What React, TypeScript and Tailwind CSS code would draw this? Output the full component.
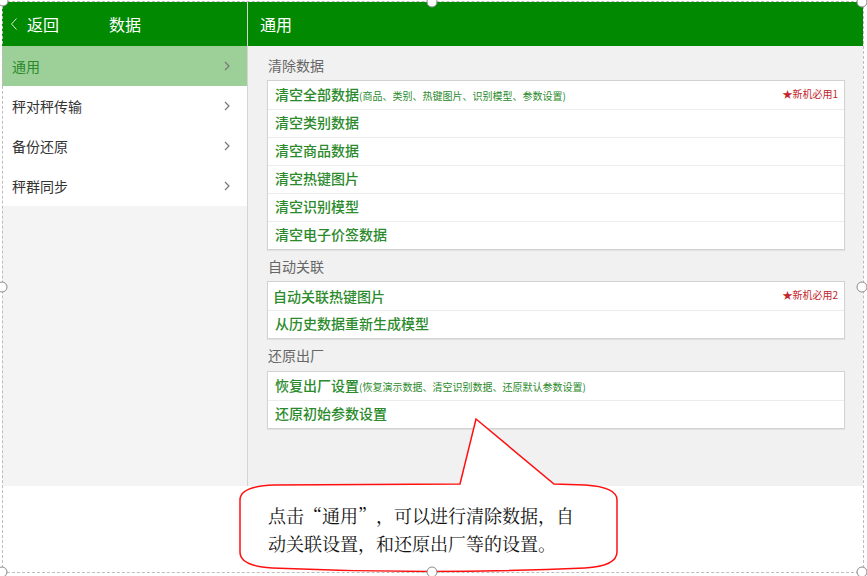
import React from "react";

const Chevron = () => (
  <svg width="6" height="10" viewBox="0 0 6 10" className="block">
    <polyline points="1,1 5,5 1,9" fill="none" stroke="#777" strokeWidth="1.2" />
  </svg>
);

const Row = ({ children, first }: { children: React.ReactNode; first?: boolean }) => (
  <div
    className={
      "h-[28px] flex items-center justify-between pl-[7px] pr-[6px] pb-[3px] " +
      (first ? "" : "border-t border-[#ececec]")
    }
  >
    {children}
  </div>
);

const Main = ({ t }: { t: string }) => (
  <span className="text-[14px] font-medium text-[#2b8a2b] leading-none">{t}</span>
);
const Tag = ({ t }: { t: string }) => (
  <span className="text-[10px] text-[#c2262c] leading-none">★{t}</span>
);

const Card = ({ children }: { children: React.ReactNode }) => (
  <div className="bg-white border border-[#d2d2d2] shadow-[0_1px_1px_rgba(0,0,0,0.06)]">{children}</div>
);

const Handle = ({ x, y }: { x: number; y: number }) => (
  <div
    className="absolute w-[11px] h-[11px] rounded-full bg-white border border-[#8a8a8a] -translate-x-1/2 -translate-y-1/2"
    style={{ left: x, top: y }}
  />
);

export default function App() {
  return (
    <div className="relative w-[867px] h-[576px] bg-white overflow-hidden font-['Noto_Sans_CJK_SC',sans-serif]">
      <div className="pl-[2px] pt-[2px]">
        <div className="flex w-[861px] h-[484px]">
          {/* left column */}
          <div className="w-[246px] flex flex-col border-r border-[#d4d4d4] bg-[#f4f4f4]">
            <div className="h-[44px] bg-[#028902] flex items-center text-white text-[16px]">
              <svg width="8" height="14" viewBox="0 0 8 14" className="ml-[8px] block">
                <polyline points="6.5,1.5 1.5,7 6.5,12.5" fill="none" stroke="#d8ecd8" strokeWidth="1" />
              </svg>
              <span className="ml-[9px]">返回</span>
              <span className="ml-[50px]">数据</span>
            </div>
            <div className="h-[40px] bg-[#9dcf99] flex items-center justify-between pl-[10px] pr-[17px]">
              <span className="text-[14px] text-[#2a8a2a]">通用</span>
              <Chevron />
            </div>
            {["秤对秤传输", "备份还原", "秤群同步"].map((t) => (
              <div key={t} className="h-[40px] bg-white flex items-center justify-between pl-[10px] pr-[17px]">
                <span className="text-[14px] text-[#333]">{t}</span>
                <Chevron />
              </div>
            ))}
          </div>
          {/* right column */}
          <div className="flex-1 flex flex-col bg-[#f1f1f1]">
            <div className="h-[44px] bg-[#028902] flex items-center pl-[12px] text-white text-[16px]">通用</div>
            <div className="pl-[19px] pr-[18px]">
              <div className="h-[34px] pt-[9px] pl-[1px] text-[14px] leading-[20px] text-[#666]">清除数据</div>
              <Card>
                <Row first>
                  <span className="flex items-baseline">
                    <Main t="清空全部数据" />
                    <span className="text-[10px] text-[#2b8a2b] leading-none">(商品、类别、热键图片、识别模型、参数设置)</span>
                  </span>
                  <Tag t="新机必用1" />
                </Row>
                <Row><Main t="清空类别数据" /></Row>
                <Row><Main t="清空商品数据" /></Row>
                <Row><Main t="清空热键图片" /></Row>
                <Row><Main t="清空识别模型" /></Row>
                <Row><Main t="清空电子价签数据" /></Row>
              </Card>
              <div className="h-[31px] pt-[6px] pl-[1px] text-[14px] leading-[20px] text-[#666]">自动关联</div>
              <Card>
                <Row first>
                  <span className="-ml-[2px]"><Main t="自动关联热键图片" /></span>
                  <Tag t="新机必用2" />
                </Row>
                <Row><Main t="从历史数据重新生成模型" /></Row>
              </Card>
              <div className="h-[32px] pt-[6px] pl-[1px] text-[14px] leading-[20px] text-[#666]">还原出厂</div>
              <Card>
                <Row first>
                  <span className="flex items-baseline">
                    <Main t="恢复出厂设置" />
                    <span className="text-[10px] text-[#2b8a2b] leading-none">(恢复演示数据、清空识别数据、还原默认参数设置)</span>
                  </span>
                </Row>
                <Row><Main t="还原初始参数设置" /></Row>
              </Card>
            </div>
          </div>
        </div>
      </div>

      {/* callout */}
      <svg className="absolute left-0 top-0 pointer-events-none" width="867" height="576">
        <path
          d="M 240 500 Q 240 486 275 485 L 460 484 L 476 419 L 554 484 L 585 485 Q 617 487 617 500 L 617 552 Q 617 566 585 568 Q 428 575 272 568 Q 240 566 240 552 Z"
          fill="#ffffff"
          stroke="#ff1010"
          strokeWidth="1.5"
          strokeLinejoin="miter"
        />
      </svg>
      <div
        lang="zh-CN"
        className="absolute left-[268px] top-[501px] text-[18px] leading-[28px] text-[#111] font-['Noto_Serif_CJK_SC','Noto_Sans_CJK_SC',serif] whitespace-nowrap [text-spacing-trim:space-all] [font-feature-settings:'fwid']"
      >
        点击“通用”，可以进行清除数据，自
        <br />
        动关联设置，和还原出厂等的设置。
      </div>

      {/* selection frame */}
      <div className="absolute left-[2px] top-[1px] w-[862px] h-[572px] border border-dashed border-[#bdbdbd] pointer-events-none" />
      <Handle x={3} y={1} />
      <Handle x={432} y={2} />
      <Handle x={862} y={2} />
      <Handle x={2} y={287} />
      <Handle x={862} y={287} />
      <Handle x={2} y={572} />
      <Handle x={432} y={572} />
      <Handle x={862} y={572} />
    </div>
  );
}
